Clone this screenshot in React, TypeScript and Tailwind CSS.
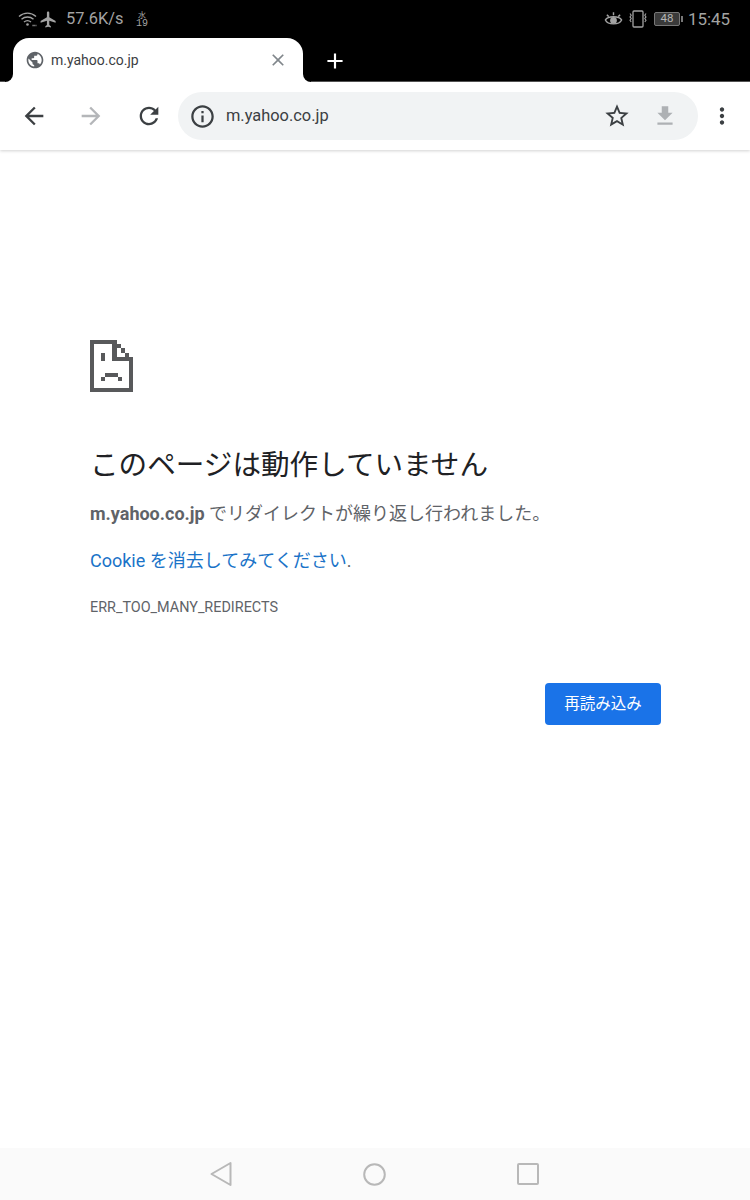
import type { ReactNode } from "react";

const PATHS = {
  plane: "M21 16v-2l-8-5V3.5c0-.83-.67-1.5-1.5-1.5S10 2.67 10 3.5V9l-8 5v2l8-2.5V19l-2 1.5V22l3.5-1 3.5 1v-1.5L13 19v-5.5l8 2.5z",
  globe:
    "M12 2C6.48 2 2 6.48 2 12s4.48 10 10 10 10-4.48 10-10S17.52 2 12 2zm-1 17.93c-3.95-.49-7-3.85-7-7.93 0-.62.08-1.21.21-1.79L9 15v1c0 1.1.9 2 2 2v1.93zm6.9-2.54c-.26-.81-1-1.39-1.9-1.39h-1v-3c0-.55-.45-1-1-1H8v-2h2c.55 0 1-.45 1-1V7h2c1.1 0 2-.9 2-2v-.41c2.93 1.19 5 4.06 5 7.41 0 2.08-.8 3.97-2.1 5.39z",
  close: "M19 6.41L17.59 5 12 10.59 6.41 5 5 6.41 10.59 12 5 17.59 6.41 19 12 13.41 17.59 19 19 17.59 13.41 12z",
  plus: "M19 13h-6v6h-2v-6H5v-2h6V5h2v6h6v2z",
  back: "M20 11H7.83l5.59-5.59L12 4l-8 8 8 8 1.41-1.41L7.83 13H20v-2z",
  forward: "M4 11h12.17l-5.59-5.59L12 4l8 8-8 8-1.41-1.41L16.17 13H4v-2z",
  reload:
    "M17.65 6.35C16.2 4.9 14.21 4 12 4c-4.42 0-7.99 3.58-7.99 8s3.57 8 7.99 8c3.73 0 6.84-2.55 7.73-6h-2.08c-.82 2.33-3.04 4-5.65 4-3.31 0-6-2.69-6-6s2.69-6 6-6c1.66 0 3.14.69 4.22 1.78L13 11h7V4l-2.35 2.35z",
  info: "M11 7h2v2h-2zm0 4h2v6h-2zm1-9C6.48 2 2 6.48 2 12s4.48 10 10 10 10-4.48 10-10S17.52 2 12 2zm0 18c-4.41 0-8-3.59-8-8s3.59-8 8-8 8 3.59 8 8-3.59 8-8 8z",
  star: "M22 9.24l-7.19-.62L12 2 9.19 8.63 2 9.24l5.46 4.73L5.82 21 12 17.27 18.18 21l-1.63-7.03L22 9.24zM12 15.4l-3.76 2.27 1-4.28-3.32-2.88 4.38-.38L12 6.1l1.71 4.04 4.38.38-3.32 2.88 1 4.28L12 15.4z",
  download: "M19 9h-4V3H9v6H5l7 7 7-7zM5 18v2h14v-2H5z",
  menu: "M12 8c1.1 0 2-.9 2-2s-.9-2-2-2-2 .9-2 2 .9 2 2 2zm0 2c-1.1 0-2 .9-2 2s.9 2 2 2 2-.9 2-2-.9-2-2-2zm0 6c-1.1 0-2 .9-2 2s.9 2 2 2 2-.9 2-2-.9-2-2-2z",
};

function Icon({ d, className }: { d: string; className: string }) {
  return (
    <svg viewBox="0 0 24 24" fill="currentColor" className={className}>
      <path d={d} />
    </svg>
  );
}

function StatusBar() {
  return (
    <div className="flex h-[38px] items-center justify-between bg-black pl-[18px] pr-[20px] font-['Roboto',sans-serif] text-[#a3a3a3]">
      <div className="flex items-center">
        <svg viewBox="0 0 20 16" fill="none" stroke="currentColor" strokeWidth="1.4" className="h-[16px] w-[20px]">
          <path d="M1 5.5C6 1 13 1 18 5.5" />
          <path d="M3.5 8.2C7 5.2 12 5.2 15.5 8.2" />
          <path d="M6 11c2-1.6 5-1.6 7 0" />
          <circle cx="9.5" cy="13.5" r="1.3" fill="currentColor" stroke="none" />
          <path d="M14.5 14.5h4" strokeWidth="1.5" strokeDasharray="1.2 .6" />
        </svg>
        <Icon d={PATHS.plane} className="ml-[1px] h-[19px] w-[19px]" />
        <span className="ml-[8px] text-[16.4px] leading-none">57.6K/s</span>
        <div className="ml-[12px] flex w-[13px] flex-col items-center">
          <span className="font-['Noto_Sans_CJK_JP',sans-serif] text-[8px] leading-[8px]">水</span>
          <span className="font-['Liberation_Mono',monospace] text-[10px] leading-[9px]">19</span>
        </div>
      </div>
      <div className="flex items-center">
        <svg viewBox="0 0 20 18" fill="none" stroke="currentColor" strokeWidth="1.5" className="h-[18px] w-[19px]">
          <path d="M1.5 10C4 5.5 16 5.5 18.5 10C16 15.5 4 15.5 1.5 10Z" />
          <circle cx="10" cy="10.5" r="2.8" fill="currentColor" />
          <path d="M3 4.5L5 6.5M10 2v3M17 4.5L15 6.5" />
        </svg>
        <svg viewBox="0 0 20 18" fill="none" stroke="currentColor" strokeWidth="1.3" className="ml-[5px] h-[18px] w-[20px]">
          <rect x="5" y="1" width="10" height="16" rx="1" />
          <path d="M2 3.5l1.2 1.7-1.2 1.7 1.2 1.7-1.2 1.7 1.2 1.7M18 3.5l-1.2 1.7 1.2 1.7-1.2 1.7 1.2 1.7-1.2 1.7" strokeWidth="1.1" />
        </svg>
        <div className="ml-[6px] flex h-[14px] w-[26px] items-center justify-center rounded-[2px] border border-[#777] bg-[#3a3a3a] text-[11.5px] leading-none text-[#b5b5b5]">
          48
        </div>
        <div className="ml-[1px] h-[6px] w-[2px] bg-[#777]" />
        <span className="ml-[5px] text-[16.9px] leading-none">15:45</span>
      </div>
    </div>
  );
}

function TabStrip() {
  return (
    <div className="flex h-[44px] items-end border-b border-[#555] bg-black pl-[13px]">
      <div className="relative z-10 mb-[-1px] flex h-[44px] w-[290px] items-center rounded-t-[16px] bg-white pl-[12px] pr-[15px]">
        {/* flared bottom corners of the tab */}
        <div className="absolute bottom-0 left-[-8px] h-[8px] w-[8px] bg-white">
          <div className="h-full w-full rounded-br-[8px] bg-black" />
        </div>
        <div className="absolute bottom-0 right-[-8px] h-[8px] w-[8px] bg-white">
          <div className="h-full w-full rounded-bl-[8px] bg-black" />
        </div>
        <Icon d={PATHS.globe} className="h-[20px] w-[20px] text-[#5f6368]" />
        <span className="ml-[6px] flex-1 font-['Roboto',sans-serif] text-[14px] leading-none text-[#3c4043]">m.yahoo.co.jp</span>
        <Icon d={PATHS.close} className="h-[20px] w-[20px] text-[#80868b]" />
      </div>
      <Icon d={PATHS.plus} className="mb-[7px] ml-[19px] h-[26px] w-[26px] text-white" />
    </div>
  );
}

function ToolButton({ children, className }: { children: ReactNode; className: string }) {
  return <div className={`flex items-center justify-center ${className}`}>{children}</div>;
}

function Toolbar() {
  return (
    <div className="relative flex h-[68px] items-center bg-white shadow-[0_1px_3px_rgba(0,0,0,0.18)]">
      <ToolButton className="ml-[19px] w-[30px]">
        <Icon d={PATHS.back} className="h-[28px] w-[28px] text-[#3c4043]" />
      </ToolButton>
      <ToolButton className="ml-[27px] w-[30px]">
        <Icon d={PATHS.forward} className="h-[28px] w-[28px] text-[#b4b6b9]" />
      </ToolButton>
      <ToolButton className="ml-[28px] w-[30px]">
        <Icon d={PATHS.reload} className="h-[28px] w-[28px] text-[#3c4043]" />
      </ToolButton>
      <div className="ml-[14px] flex h-[48px] w-[520px] items-center rounded-full bg-[#f1f3f4] pl-[11px] pr-[20px]">
        <Icon d={PATHS.info} className="h-[27px] w-[27px] text-[#3c4043]" />
        <span className="ml-[10px] flex-1 font-['Roboto',sans-serif] text-[16.4px] leading-none text-[#3c4043]">m.yahoo.co.jp</span>
        <Icon d={PATHS.star} className="h-[28px] w-[28px] text-[#3c4043]" />
        <Icon d={PATHS.download} className="ml-[21px] h-[26px] w-[26px] text-[#aeb1b4]" />
      </div>
      <Icon d={PATHS.menu} className="ml-[11px] h-[26px] w-[26px] text-[#3c4043]" />
    </div>
  );
}

function SadPage() {
  return (
    <svg viewBox="0 0 43 52" fill="#58595b" className="h-[52px] w-[43px]">
      <path d="M0 0H27V4H4V48H39V21H22V0H27V17H43V52H0Z" />
      <rect x="27" y="4" width="4" height="4" />
      <rect x="31" y="8" width="4" height="5" />
      <rect x="35" y="13" width="4" height="4" />
      <rect x="11" y="13" width="4" height="8" />
      <rect x="15" y="33" width="13" height="4" />
      <rect x="11" y="37" width="4" height="4" />
      <rect x="28" y="37" width="4" height="4" />
    </svg>
  );
}

function ErrorPage() {
  return (
    <main className="flex-1 bg-white pl-[90px] pr-[89px] pt-[190px]">
      <SadPage />
      <h1 className="mt-[53px] font-['Roboto','Noto_Sans_CJK_JP',sans-serif] text-[28.6px] font-normal leading-[40px] text-[#202124]">
        このページは動作していません
      </h1>
      <p className="mt-[17px] font-['Roboto','Noto_Sans_CJK_JP',sans-serif] text-[18px] leading-[24px] text-[#5f6368]">
        <b className="font-bold">m.yahoo.co.jp</b> でリダイレクトが繰り返し行われました。
      </p>
      <p className="mt-[23px] font-['Roboto','Noto_Sans_CJK_JP',sans-serif] text-[18px] leading-[24px] text-[#1a73c8]">
        Cookie を消去してみてください<span className="text-[#5f6368]">.</span>
      </p>
      <p className="mt-[25px] font-['Roboto',sans-serif] text-[14.4px] leading-[20px] text-[#5f6368]">ERR_TOO_MANY_REDIRECTS</p>
      <div className="mt-[65px] flex justify-end">
        <button className="flex h-[42px] w-[116px] items-center justify-center rounded-[4px] bg-[#1a73e8] pt-[1px] font-['Roboto','Noto_Sans_CJK_JP',sans-serif] text-[15.5px] leading-none text-white">
          再読み込み
        </button>
      </div>
    </main>
  );
}

function NavBar() {
  return (
    <div className="flex h-[52px] items-center justify-center gap-[131px] bg-[#fafafa] pr-[1px]">
      <svg viewBox="0 0 22 26" fill="none" stroke="#b8b8b8" strokeWidth="2" strokeLinejoin="round" className="h-[26px] w-[22px]">
        <path d="M20.5 2V24L1.5 13Z" />
      </svg>
      <svg viewBox="0 0 23 23" fill="none" stroke="#b8b8b8" strokeWidth="2" className="h-[23px] w-[23px]">
        <circle cx="11.5" cy="11.5" r="10.3" />
      </svg>
      <svg viewBox="0 0 22 22" fill="none" stroke="#b8b8b8" strokeWidth="2" className="h-[22px] w-[22px]">
        <rect x="1" y="1" width="20" height="20" rx="1" />
      </svg>
    </div>
  );
}

export default function App() {
  return (
    <div className="flex h-[1200px] w-[750px] flex-col overflow-hidden bg-white">
      <StatusBar />
      <TabStrip />
      <Toolbar />
      <ErrorPage />
      <NavBar />
    </div>
  );
}
